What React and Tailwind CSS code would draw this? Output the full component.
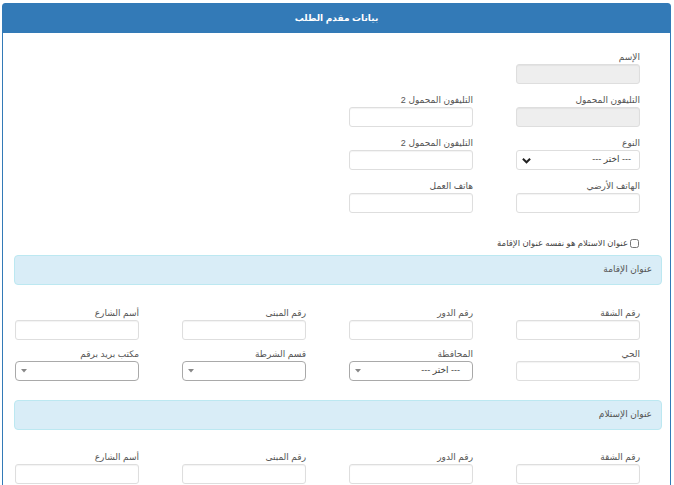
import React from 'react';

const font = { fontFamily: '"Liberation Sans", "DejaVu Sans", Arial, sans-serif' };

// حقل نصي بسيط مع عنوان
const Field = ({ label, disabled }) => (
    <div className="flex flex-col">
        <label className="h-[13px] text-[9px] leading-[13px] text-[#555] text-right">{label}</label>
        <input
            disabled={disabled}
            className={`h-[20px] w-[124px] rounded-[3px] border border-[#dedede] shadow-[inset_0_1px_1px_rgba(0,0,0,0.05)] ${disabled ? 'bg-[#eeeeee]' : 'bg-white'}`}
        />
    </div>
);

// قائمة اختيار عادية بسهم عريض
const TypeSelect = ({ label }) => (
    <div className="flex flex-col">
        <label className="h-[13px] text-[9px] leading-[13px] text-[#555] text-right">{label}</label>
        <div className="flex h-[20px] w-[124px] items-center justify-between rounded-[3px] border border-[#dedede] bg-white pl-[5px] pr-[8px] text-[9px] text-[#444]">
            <span>--- اختر ---</span>
            <svg width="9" height="7" viewBox="0 0 10 7"><path d="M1 1.5 L5 5.5 L9 1.5" fill="none" stroke="#222" strokeWidth="2.2" /></svg>
        </div>
    </div>
);

// قائمة بنمط select2 بحد أغمق
const Select2 = ({ label, value }) => (
    <div className="flex flex-col">
        <label className="h-[13px] text-[9px] leading-[13px] text-[#555] text-right">{label}</label>
        <div className="flex h-[20px] w-[124px] items-center justify-between rounded-[4px] border border-[#a9a9a9] bg-white pl-[5px] pr-[12px] text-[9px] text-[#444]">
            <span>{value}</span>
            <svg width="6" height="4" viewBox="0 0 6 4"><path d="M0 0 L6 0 L3 3.5 Z" fill="#888" /></svg>
        </div>
    </div>
);

const Box = ({ title }) => (
    <div className="ml-[11px] mr-[8px] flex h-[30px] items-center rounded-[4px] border border-[#bce8f1] bg-[#d9edf7] pr-[9px] text-[9px] text-[#555]">
        {title}
    </div>
);

const grid = 'grid grid-cols-[repeat(4,124px)] gap-x-[43px] pr-[30px]';

export default function App() {
    return (
        <div dir="rtl" style={font} className="h-[485px] w-[674px] overflow-hidden bg-white">
            <div className="ml-[2px] mr-[3px] mt-[3px] rounded-t-[3px] border border-[#337ab7] pb-[40px]">
                <div className="flex h-[29px] items-center justify-center bg-[#337ab7] text-[9px] font-bold text-white">
                    بيانات مقدم الطلب
                </div>

                <div className="pt-[18px]">
                    <div className={`${grid} gap-y-[10px]`}>
                        <Field label="الإسم" disabled />
                        <div />
                        <div />
                        <div />
                        <Field label="التليفون المحمول" disabled />
                        <Field label="التليفون المحمول 2" />
                        <div />
                        <div />
                        <TypeSelect label="النوع" />
                        <Field label="التليفون المحمول 2" />
                        <div />
                        <div />
                        <Field label="الهاتف الأرضي" />
                        <Field label="هاتف العمل" />
                    </div>

                    <label className="mt-[24px] flex items-center gap-[2px] pr-[31px] text-[8.5px] text-[#444]">
                        <input type="checkbox" className="m-0 h-[9px] w-[9px]" />
                        <span>عنوان الاستلام هو نفسه عنوان الإقامة</span>
                    </label>

                    <div className="mt-[5px]">
                        <Box title="عنوان الإقامة" />
                    </div>

                    <div className={`${grid} mt-[22px] gap-y-[8px]`}>
                        <Field label="رقم الشقة" />
                        <Field label="رقم الدور" />
                        <Field label="رقم المبنى" />
                        <Field label="أسم الشارع" />
                        <Field label="الحي" />
                        <Select2 label="المحافظة" value="--- اختر ---" />
                        <Select2 label="قسم الشرطة" value="" />
                        <Select2 label="مكتب بريد برقم" value="" />
                    </div>

                    <div className="mt-[19px]">
                        <Box title="عنوان الإستلام" />
                    </div>

                    <div className={`${grid} mt-[21px]`}>
                        <Field label="رقم الشقة" />
                        <Field label="رقم الدور" />
                        <Field label="رقم المبنى" />
                        <Field label="أسم الشارع" />
                    </div>
                </div>
            </div>
        </div>
    );
}
